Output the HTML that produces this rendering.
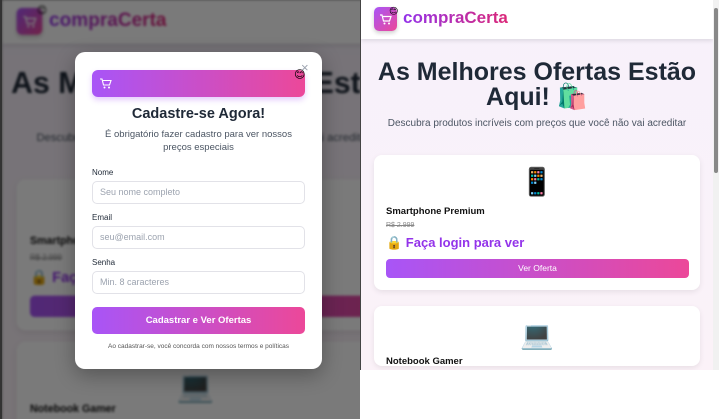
<!DOCTYPE html>
<html><head><meta charset="utf-8"><style>
*{box-sizing:border-box;margin:0;padding:0}
body{width:719px;height:419px;overflow:hidden;background:#fff;font-family:"Liberation Sans","DejaVu Sans",sans-serif;position:relative}
.page{position:absolute;width:356px;height:420px;background:linear-gradient(180deg,#f7f1fb,#fbf2f8);overflow:hidden}
.hdr{position:absolute;left:0;top:0;width:100%;height:39px;background:#fff;box-shadow:0 2px 4px rgba(0,0,0,.1)}
.logo{position:absolute;left:13px;top:7px;width:23px;height:24px;border-radius:5px;background:linear-gradient(135deg,#a855f7,#ec4899);box-shadow:0 2px 4px rgba(0,0,0,.2)}
.logo svg{position:absolute;left:6px;top:7px}
.smile{position:absolute;font-size:9px;line-height:1}
.brand{position:absolute;left:42px;top:8px;font-size:17px;font-weight:bold;background:linear-gradient(90deg,#9333ea,#db2777);-webkit-background-clip:text;color:transparent}
.title{position:absolute;left:0;width:100%;top:60px;text-align:center;font-size:25px;font-weight:bold;line-height:25px;color:#1f2937}
.sub{position:absolute;left:0;width:100%;top:118px;text-align:center;font-size:10px;color:#4b5563}
.card{position:absolute;left:13px;width:326px;background:#fff;border-radius:8px;box-shadow:0 2px 6px rgba(0,0,0,.08)}
.emo{position:absolute;left:0;width:100%;text-align:center;font-size:27px;line-height:30px}
.pn{position:absolute;left:12px;font-size:9.5px;font-weight:bold;color:#111}
.old{position:absolute;left:12px;top:67px;font-size:7px;color:#888;text-decoration:line-through}
.lk{position:absolute;left:12px;top:80px;font-size:13px;font-weight:bold;color:#9333ea}
.btn{position:absolute;left:12px;top:104px;width:303px;height:19px;border-radius:4px;background:linear-gradient(90deg,#a855f7,#ec4899);color:#fff;font-size:8.5px;text-align:center;line-height:19px}
.modal{position:absolute;left:75px;top:52px;width:247px;height:317px;background:#fff;border-radius:10px;box-shadow:0 6px 20px rgba(0,0,0,.3)}
.mbar{position:absolute;left:17px;top:18px;width:213px;height:27px;border-radius:6px;background:linear-gradient(90deg,#a855f7,#ec4899);box-shadow:0 3px 6px rgba(168,85,247,.3)}
.lbl{position:absolute;left:17px;font-size:8px;color:#1f2937}
.inp{position:absolute;left:17px;width:213px;height:23px;border:1px solid #e2e2e8;border-radius:5px;font-size:9px;color:#9ca3af;padding-left:7px;line-height:21px}
</style></head><body>

<div style="position:absolute;left:0;top:0;width:360px;height:419px;overflow:hidden;background:#888">
 <div style="position:absolute;left:2px;top:0;width:360px;height:380px;transform:scale(1.12);transform-origin:0 0;filter:blur(1.2px)">
  <div class="page" style="width:360px;height:380px">
   <div class="hdr"><div class="logo"><svg width="12" height="11" viewBox="0 0 12 11"><path d="M0 1h2l1.5 6h6l1.5-4.5H3" fill="none" stroke="#fff" stroke-width="1.2"/><circle cx="4.5" cy="9.5" r="1" fill="#fff"/><circle cx="9" cy="9.5" r="1" fill="#fff"/></svg></div><div class="smile" style="left:31px;top:5px">😊</div><div class="brand">compraCerta</div></div>
   <div class="title" style="font-size:27px;top:62px;white-space:nowrap">As Melhores Ofertas Estão</div>
   <div class="sub" style="white-space:nowrap">Descubra produtos incríveis com preços que você não vai acreditar</div>
   <div class="card" style="top:160px;height:135px;width:360px"><div class="pn" style="top:50px">Smartphone Premium</div><div class="old">R$ 2.999</div><div class="lk">🔒 Faça login para ver</div><div class="btn" style="width:340px"></div></div>
   <div class="card" style="top:305px;height:120px;width:360px"><div class="emo" style="top:25px;left:-20px">💻</div><div class="pn" style="top:55px">Notebook Gamer</div></div>
  </div>
 </div>
 <div style="position:absolute;inset:0;background:rgba(0,0,0,.52)"></div>
 <div style="position:absolute;left:0;top:0;width:2px;height:419px;background:#333"></div>
 <div class="modal">
  <div class="mbar"><svg style="position:absolute;left:8px;top:8px" width="12" height="11" viewBox="0 0 12 11"><path d="M0 1h2l1.5 6h6l1.5-4.5H3" fill="none" stroke="#fff" stroke-width="1.1"/><circle cx="4.5" cy="9.5" r="1" fill="#fff"/><circle cx="9" cy="9.5" r="1" fill="#fff"/></svg></div>
  <div class="smile" style="left:219px;top:18px;font-size:11px">😊</div>
  <div style="position:absolute;left:226px;top:9px;font-size:13px;color:#9ca3af;line-height:13px">×</div>
  <div style="position:absolute;left:0;width:100%;top:54px;text-align:center;font-size:14.5px;font-weight:bold;color:#1f2937">Cadastre-se Agora!</div>
  <div style="position:absolute;left:20px;width:207px;top:76px;text-align:center;font-size:9.5px;line-height:13px;color:#4b5563">É obrigatório fazer cadastro para ver nossos preços especiais</div>
  <div class="lbl" style="top:116px">Nome</div><div class="inp" style="top:129px">Seu nome completo</div>
  <div class="lbl" style="top:161px">Email</div><div class="inp" style="top:174px">seu@email.com</div>
  <div class="lbl" style="top:206px">Senha</div><div class="inp" style="top:219px">Min. 8 caracteres</div>
  <div style="position:absolute;left:17px;top:255px;width:213px;height:27px;border-radius:5px;background:linear-gradient(90deg,#a855f7,#ec4899);color:#fff;font-size:9.5px;font-weight:bold;text-align:center;line-height:27px">Cadastrar e Ver Ofertas</div>
  <div style="position:absolute;left:0;width:100%;top:291px;text-align:center;font-size:6.5px;color:#555">Ao cadastrar-se, você concorda com nossos termos e políticas</div>
 </div>
</div>

<div style="position:absolute;left:360px;top:0;width:359px;height:370px;overflow:hidden;border-left:1px solid #444">
 <div class="page" style="left:0;top:0;width:352px;height:370px">
  <div class="hdr"><div class="logo"><svg width="12" height="11" viewBox="0 0 12 11"><path d="M0 1h2l1.5 6h6l1.5-4.5H3" fill="none" stroke="#fff" stroke-width="1.2"/><circle cx="4.5" cy="9.5" r="1" fill="#fff"/><circle cx="9" cy="9.5" r="1" fill="#fff"/></svg></div><div class="smile" style="left:28px;top:7px">😊</div><div class="brand">compraCerta</div></div>
  <div class="title">As Melhores Ofertas Estão<br>Aqui! 🛍️</div>
  <div class="sub">Descubra produtos incríveis com preços que você não vai acreditar</div>
  <div class="card" style="top:155px;height:135px"><div class="emo" style="top:12px">📱</div><div class="pn" style="top:51px">Smartphone Premium</div><div class="old">R$ 2.999</div><div class="lk">🔒 Faça login para ver</div><div class="btn">Ver Oferta</div></div>
  <div class="card" style="top:306px;height:60px"><div class="emo" style="top:14px">💻</div><div class="pn" style="top:50px">Notebook Gamer</div></div>
 </div>
 <div style="position:absolute;left:352px;top:0;width:7px;height:370px;background:#f1f1f1"><div style="position:absolute;left:1px;top:8px;width:4px;height:165px;background:#888;border-radius:2px"></div></div>
</div>
</body></html>
